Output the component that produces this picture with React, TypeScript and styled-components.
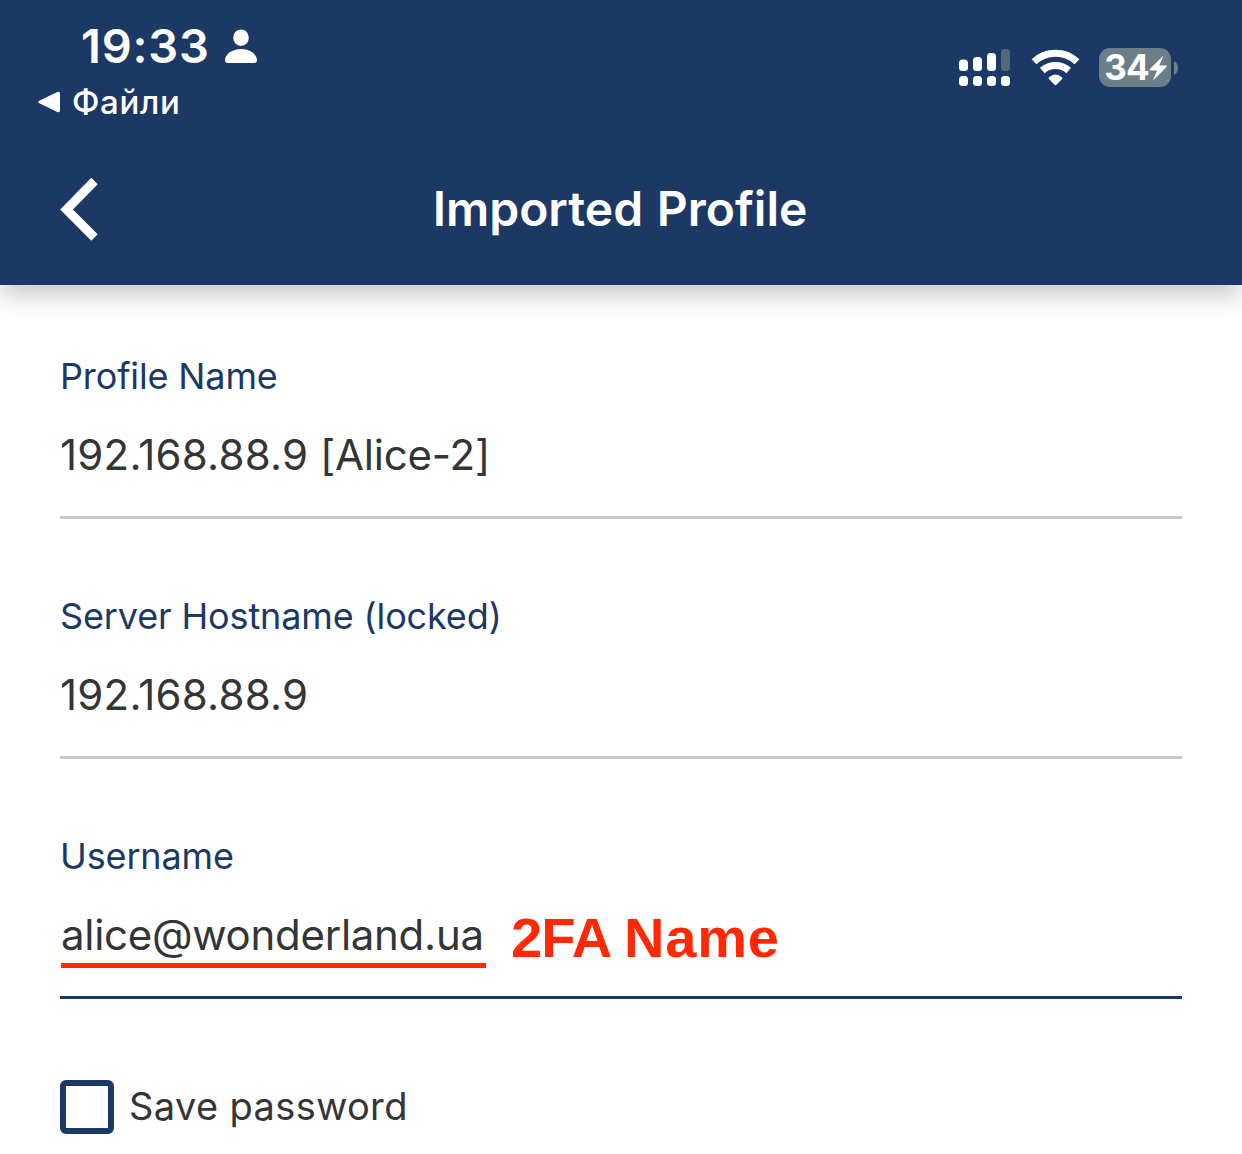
import React from "react";
import styled, { createGlobalStyle } from "styled-components";

const navy = "#1c3865";
const ink = "#333536";

const GlobalStyle = createGlobalStyle`
  * { box-sizing: border-box; }
  body { margin: 0; background: #fff; }
`;

const Screen = styled.div`
  width: 1242px;
  height: 1154px;
  overflow: hidden;
  background: #fff;
  font-family: Inter, "Liberation Sans", sans-serif;
`;

const Header = styled.header`
  height: 285px;
  background: ${navy};
  color: #fff;
  box-shadow: 0 10px 24px rgba(0, 0, 0, 0.22);
`;

const StatusBar = styled.div`
  height: 133px;
  display: flex;
  justify-content: space-between;
  padding: 16px 64px 0 38px;
`;

const ClockRow = styled.div`
  display: flex;
  align-items: center;
  gap: 15px;
  height: 61px;
  padding-left: 43px;
`;

const Clock = styled.span`
  padding-bottom: 2px;
  font-size: 47px;
  font-weight: 600;
  line-height: 59px;
  letter-spacing: 0.8px;
`;

const BackToApp = styled.div`
  display: flex;
  align-items: center;
  gap: 12px;
  height: 50px;
  font-size: 33px;
  font-weight: 500;
  line-height: 50px;
  letter-spacing: 0.7px;
`;

const Indicators = styled.div`
  display: flex;
  align-items: flex-end;
  height: 39px;
  margin-top: 32px;
`;

const Signal = styled.svg`
  margin-right: 20px;
`;

const Wifi = styled.svg`
  margin-right: 19px;
`;

const Battery = styled.div`
  display: flex;
  align-items: center;
  justify-content: center;
  width: 72px;
  height: 39px;
  padding-left: 1px;
  border-radius: 11px;
  background: #6b7f88;
  font-size: 35px;
  font-weight: 700;
  line-height: 39px;
  letter-spacing: -1px;
`;

const BatteryTip = styled.svg`
  align-self: center;
  margin-left: 3px;
`;

const NavBar = styled.nav`
  display: grid;
  grid-template-columns: 100px 1fr 100px;
  align-items: center;
  height: 151px;
`;

const BackButton = styled.button`
  width: 100px;
  height: 70px;
  padding: 0 0 0 58px;
  border: 0;
  background: none;
  svg { display: block; }
`;

const Title = styled.h1`
  margin: 0 1px 0 -1px;
  text-align: center;
  font-size: 48px;
  font-weight: 600;
  line-height: 60px;
  word-spacing: 1.5px;
`;

const Form = styled.form`
  display: flex;
  flex-direction: column;
  gap: 75px;
  padding: 69px 60px 0;
`;

const Field = styled.div<{ $active?: boolean }>`
  height: 165px;
  border-bottom: 3px solid ${(p) => (p.$active ? navy : "#c8c9cb")};
`;

const Label = styled.div`
  margin-bottom: 31px;
  color: ${navy};
  font-size: 36px;
  line-height: 44px;
  letter-spacing: -0.13px;
`;

const ValueRow = styled.div`
  display: flex;
  gap: 25px;
`;

const Value = styled.div<{ $marked?: boolean }>`
  height: ${(p) => (p.$marked ? "59px" : "52px")};
  margin-left: ${(p) => (p.$marked ? "1px" : "0")};
  width: ${(p) => (p.$marked ? "425px" : "auto")};
  border-bottom: ${(p) => (p.$marked ? "5px solid #ff2a05" : "0")};
  color: ${ink};
  font-size: 42px;
  line-height: 52px;
  white-space: pre;
`;

const Run = styled.span<{ $tracking: number }>`
  letter-spacing: ${(p) => p.$tracking}px;
`;

const Note = styled.strong`
  color: #ff2a05;
  font-family: "Liberation Sans", Arial, sans-serif;
  font-size: 56px;
  line-height: 58px;
  white-space: pre;
`;

const CheckRow = styled.label`
  display: flex;
  align-items: center;
  gap: 15px;
  height: 54px;
  margin-top: 6px;
  color: ${ink};
  font-size: 38px;
  line-height: 54px;
  letter-spacing: 0.38px;
`;

const CheckText = styled.span`
  padding-bottom: 2px;
  line-height: 52px;
`;

const Box = styled.span`
  width: 54px;
  height: 54px;
  border: 6px solid ${navy};
  border-radius: 6px;
`;

type Piece = { text: string; tracking: number };
type FieldData = { label: string; value: Piece[]; note?: Piece[] };

const address: Piece = { text: "192.168.88.9", tracking: 0.24 };

const fields: FieldData[] = [
  { label: "Profile Name", value: [address, { text: " [Alice-2]", tracking: -0.2 }] },
  { label: "Server Hostname (locked)", value: [address] },
  {
    label: "Username",
    value: [{ text: "alice@wonderland.ua", tracking: -0.28 }],
    note: [
      { text: "2FA ", tracking: -0.8 },
      { text: "Name", tracking: 0.8 },
    ],
  },
];

const renderRuns = (pieces: Piece[]) =>
  pieces.map((p) => (
    <Run key={p.text} $tracking={p.tracking}>
      {p.text}
    </Run>
  ));

export default function App() {
  return (
    <Screen>
      <GlobalStyle />
      <Header>
        <StatusBar>
          <div>
            <ClockRow>
              <Clock>19:33</Clock>
              <svg width="32" height="35" viewBox="0 0 32 35" fill="#fff">
                <ellipse cx="16" cy="8.700" rx="7.800" ry="8.300" />
                <path d="M3 34C.8 34 0 33 0 31C.5 25 7 20 16 20S31.500 25 32 31C32 33 31.200 34 29 34Z" />
              </svg>
            </ClockRow>
            <BackToApp>
              <svg width="22" height="22" viewBox="0 0 22 22" fill="#fff">
                <path d="M1.300 9.700L19.300 1.100Q22 0 22 3V19Q22 22 19.300 20.900L1.300 12.300Q-.7 11 1.300 9.700Z" />
              </svg>
              <span>Файли</span>
            </BackToApp>
          </div>
          <Indicators>
            <Signal width="52" height="38" viewBox="0 0 52 38" fill="#fff">
              <rect x="0" y="10.500" width="9" height="11.500" rx="3.500" />
              <rect x="14" y="8" width="9" height="14" rx="3.500" />
              <rect x="28" y="4" width="9" height="18" rx="3.500" />
              <rect x="42" y="0" width="9" height="22" rx="3.500" fill="#53687a" />
              <rect x="0" y="27" width="9" height="10" rx="3.500" />
              <rect x="14" y="27" width="9" height="10" rx="3.500" />
              <rect x="28" y="27" width="9" height="10" rx="3.500" />
              <rect x="42" y="27" width="9" height="10" rx="3.500" />
            </Signal>
            <Wifi width="49" height="38" viewBox="0 0 49 38" fill="none" stroke="#fff" strokeWidth="7">
              <path d="M3 12.800Q12 4.300 24.500 4.300T46 12.800" />
              <path d="M11.300 21.500Q17 16.500 24.500 16.500T37.700 21.500" />
              <path d="M18 30Q16.800 29 18 28.200Q24.500 23 31 28.200Q32.200 29 31 30L25.500 35.800Q24.500 36.600 23.500 35.800Z" fill="#fff" stroke="none" />
            </Wifi>
            <Battery>
              <span>34</span>
              <svg width="18" height="26" viewBox="0 0 18 27" preserveAspectRatio="none" fill="#fff">
                <path d="M14.500 .5L.7 14.800Q.2 16.200 1.500 16.200H8L4 26.500L17.500 12.500Q18 11 16.800 11H10.300Z" />
              </svg>
            </Battery>
            <BatteryTip width="4" height="14" viewBox="0 0 4 14" fill="#6b7f88">
              <path d="M0 0Q4 2 4 7T0 14Z" />
            </BatteryTip>
          </Indicators>
        </StatusBar>
        <NavBar>
          <BackButton type="button" aria-label="Back">
            <svg width="42" height="68" viewBox="0 0 42 68" fill="none" stroke="#fff" strokeWidth="9">
              <path d="M36.500 6L8.500 34.500L36.500 62.500" />
            </svg>
          </BackButton>
          <Title>Imported Profile</Title>
        </NavBar>
      </Header>
      <Form>
        {fields.map((f) => (
          <Field key={f.label} $active={!!f.note}>
            <Label>{f.label}</Label>
            <ValueRow>
              <Value $marked={!!f.note}>{renderRuns(f.value)}</Value>
              {f.note && <Note>{renderRuns(f.note)}</Note>}
            </ValueRow>
          </Field>
        ))}
        <CheckRow>
          <Box />
          <CheckText>Save password</CheckText>
        </CheckRow>
      </Form>
    </Screen>
  );
}
